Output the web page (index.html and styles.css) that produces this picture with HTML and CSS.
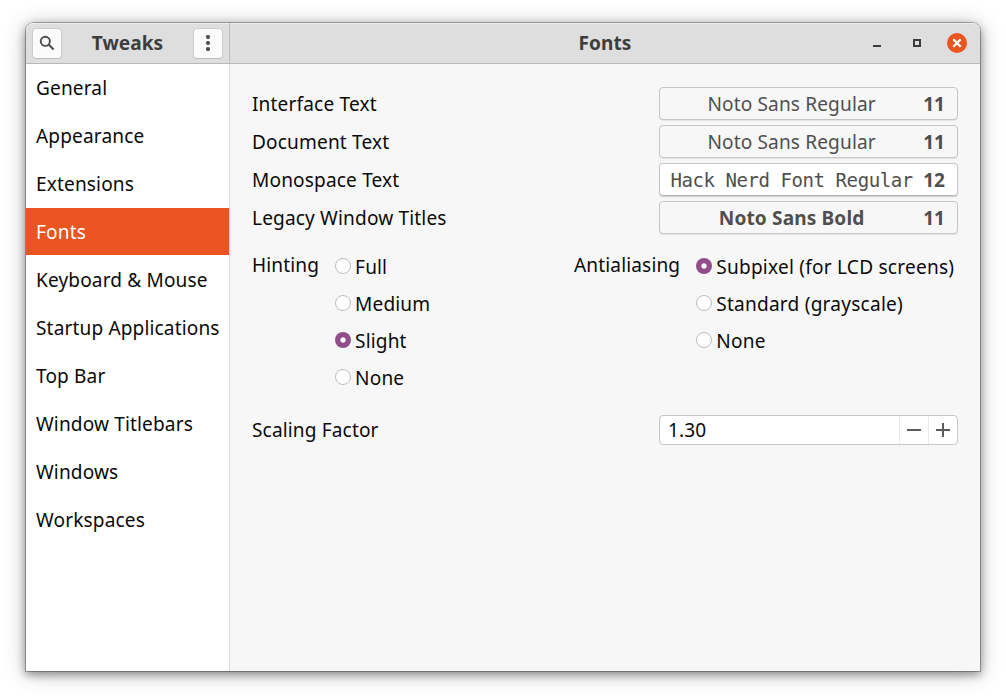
FILE: index.html
```html
<!DOCTYPE html>
<html lang="en">
<head>
<meta charset="utf-8">
<title>Tweaks</title>
<link rel="stylesheet" href="styles.css">
</head>
<body>
<div class="window">
  <header class="headerbar">
    <div class="header-left">
      <button class="tool" aria-label="Search">
        <svg width="16" height="16" viewBox="0 0 16 16"><circle cx="6.3" cy="6.3" r="4.6" fill="none" stroke="#4d4d4d" stroke-width="1.9"/><path d="M9.6 9.6L14.6 14.6" stroke="#4d4d4d" stroke-width="2.1"/></svg>
      </button>
      <h1 class="title">Tweaks</h1>
      <button class="tool" aria-label="Menu">
        <svg width="16" height="16" viewBox="0 0 16 16" fill="#4d4d4d"><circle cx="8" cy="2" r="2.1"/><circle cx="8" cy="8" r="2.1"/><circle cx="8" cy="14" r="2.1"/></svg>
      </button>
    </div>
    <div class="header-right">
      <h1 class="title">Fonts</h1>
      <div class="controls">
        <svg width="16" height="16" viewBox="0 0 16 16"><path d="M4 10H12V12H4Z" fill="#3d3d3d"/></svg>
        <svg width="16" height="16" viewBox="0 0 16 16"><path d="M5 5H11V11H5Z" fill="none" stroke="#3d3d3d" stroke-width="2"/></svg>
        <svg width="20" height="20" viewBox="0 0 20 20"><circle cx="10" cy="10" r="10" fill="#e95420"/><path d="M6.3 6.3L13.7 13.7M13.7 6.3L6.3 13.7" stroke="#fff" stroke-width="2.3"/></svg>
      </div>
    </div>
  </header>
  <div class="body">
    <nav class="sidebar">
      <div class="item">General</div>
      <div class="item">Appearance</div>
      <div class="item">Extensions</div>
      <div class="item selected">Fonts</div>
      <div class="item">Keyboard &amp; Mouse</div>
      <div class="item">Startup Applications</div>
      <div class="item">Top Bar</div>
      <div class="item">Window Titlebars</div>
      <div class="item">Windows</div>
      <div class="item">Workspaces</div>
    </nav>
    <main class="content">
      <div class="font-row"><span>Interface Text</span><button class="font-button"><span class="name">Noto Sans Regular</span><b>11</b></button></div>
      <div class="font-row"><span>Document Text</span><button class="font-button"><span class="name">Noto Sans Regular</span><b>11</b></button></div>
      <div class="font-row"><span>Monospace Text</span><button class="font-button hover"><span class="name mono">Hack Nerd Font Regular</span><b>12</b></button></div>
      <div class="font-row"><span>Legacy Window Titles</span><button class="font-button"><span class="name bold">Noto Sans Bold</span><b>11</b></button></div>
      <div class="options">
        <div class="group hinting">
          <span class="group-label">Hinting</span>
          <div class="radios">
            <div class="radio"><i class="dot"></i>Full</div>
            <div class="radio"><i class="dot"></i>Medium</div>
            <div class="radio"><i class="dot on"></i>Slight</div>
            <div class="radio"><i class="dot"></i>None</div>
          </div>
        </div>
        <div class="group antialiasing">
          <span class="group-label">Antialiasing</span>
          <div class="radios">
            <div class="radio"><i class="dot on"></i>Subpixel (for LCD screens)</div>
            <div class="radio"><i class="dot"></i>Standard (grayscale)</div>
            <div class="radio"><i class="dot"></i>None</div>
          </div>
        </div>
      </div>
      <div class="scaling">
        <span>Scaling Factor</span>
        <div class="spin">
          <span class="value">1.30</span>
          <span class="step"><svg width="16" height="16" viewBox="0 0 16 16"><path d="M1 7H15V9H1Z" fill="#5c5c5c"/></svg></span>
          <span class="step"><svg width="16" height="16" viewBox="0 0 16 16"><path d="M1 7H7V1H9V7H15V9H9V15H7V9H1Z" fill="#5c5c5c"/></svg></span>
        </div>
      </div>
    </main>
  </div>
</div>
</body>
</html>
```
FILE: styles.css
```css
* { box-sizing: border-box; }
body {
  margin: 0;
  height: 700px;
  overflow: hidden;
  padding: 23px 26px 29px;
  background: #fff;
  color: #0a0a0a;
  font: 19.07px/26px "Noto Sans", sans-serif;
  letter-spacing: 0.14px;
}
svg { display: block; }
button { font: inherit; color: inherit; letter-spacing: inherit; margin: 0; }
.window {
  width: 954px;
  height: 648px;
  display: flex;
  flex-direction: column;
  border-radius: 8px 8px 0 0;
  box-shadow: 0 0 0 1px rgba(0,0,0,.28), 0 3px 9px 1px rgba(0,0,0,.35), 0 2px 22px rgba(0,0,0,.25);
}
.headerbar {
  height: 41px;
  display: flex;
  background: #dedede;
  border-bottom: 1px solid #b9b9b9;
  border-radius: 8px 8px 0 0;
  box-shadow: inset 0 1px #efefef;
  color: #3d3d3d;
}
.header-left {
  width: 204px;
  padding: 0 6px;
  border-right: 1px solid #bdbdbd;
  display: flex;
  align-items: center;
  justify-content: space-between;
}
.title { margin: 0; font-size: 19.07px; line-height: 26px; font-weight: 700; letter-spacing: 0.04px; }
.tool {
  width: 30px;
  height: 31px;
  padding: 0;
  display: flex;
  align-items: center;
  justify-content: center;
  background: #fbfbfb;
  border: 1px solid #cbcbcb;
  border-bottom-color: #bdbdbd;
  border-radius: 4px;
}
.header-right {
  flex: 1;
  display: grid;
  grid-template-columns: 1fr auto 1fr;
  align-items: center;
}
.header-right .title { grid-column: 2; }
.controls {
  display: flex;
  align-items: center;
  justify-content: flex-end;
  padding-right: 13px;
}
.controls svg:nth-child(2) { margin: 0 22px 0 24px; }
.body { flex: 1; display: flex; }
.sidebar { width: 204px; background: #fff; border-right: 1px solid #dcdcdc; }
.item { height: 48px; padding: 11px 10px; border-bottom: 1px solid #fff; white-space: nowrap; }
.item.selected { background: #e95420; background-clip: padding-box; color: #fff; }
.content { flex: 1; background: #f7f7f7; padding: 23px 22px 0; }
.font-row { display: flex; align-items: flex-start; justify-content: space-between; height: 38px; }
.font-row > span { padding-top: 4px; letter-spacing: 0.16px; }
.font-button {
  width: 299px;
  height: 33px;
  padding: 0 12px 0 10px;
  display: flex;
  align-items: center;
  gap: 10px;
  background: #f7f7f7;
  border: 1px solid #c6c6c6;
  border-radius: 4px;
  box-shadow: 0 1px 1px rgba(0,0,0,.08);
  color: #4f4f4f;
}
.font-button b { line-height: 28px; padding-top: 1px; letter-spacing: 0; }
.font-button.hover { background: #fff; border-bottom-color: #b8b8b8; box-shadow: 0 1px 1px rgba(0,0,0,.18); }
.name { flex: 1; text-align: center; white-space: nowrap; padding-top: 1px; }
.name.bold { font-weight: 700; }
.name.mono { font: 19.07px/26px "DejaVu Sans Mono", monospace; letter-spacing: -0.47px; padding-top: 0; }
.options { display: flex; margin-top: 13px; height: 148px; }
.group { display: flex; }
.hinting { width: 322px; }
.group-label { margin-right: 16px; }
.radio { height: 37px; padding-top: 2px; display: flex; align-items: flex-start; gap: 4px; white-space: nowrap; }
.antialiasing .radio { letter-spacing: 0.23px; }
.dot {
  width: 16px;
  height: 16px;
  margin-top: 4px;
  border-radius: 50%;
  border: 1px solid #bebebe;
  background: #fff;
}
.dot.on { border: 0; background: radial-gradient(circle, #fff 2.2px, #924d8b 3.1px); }
.scaling { display: flex; align-items: center; justify-content: space-between; margin-top: 15px; height: 30px; }
.spin {
  width: 299px;
  height: 30px;
  display: flex;
  align-items: stretch;
  background: #fff;
  border: 1px solid #c6c6c6;
  border-radius: 4px;
}
.value { flex: 1; padding-left: 8px; line-height: 28px; }
.step { width: 29px; border-left: 1px solid #ececec; display: flex; align-items: center; justify-content: center; }
```
